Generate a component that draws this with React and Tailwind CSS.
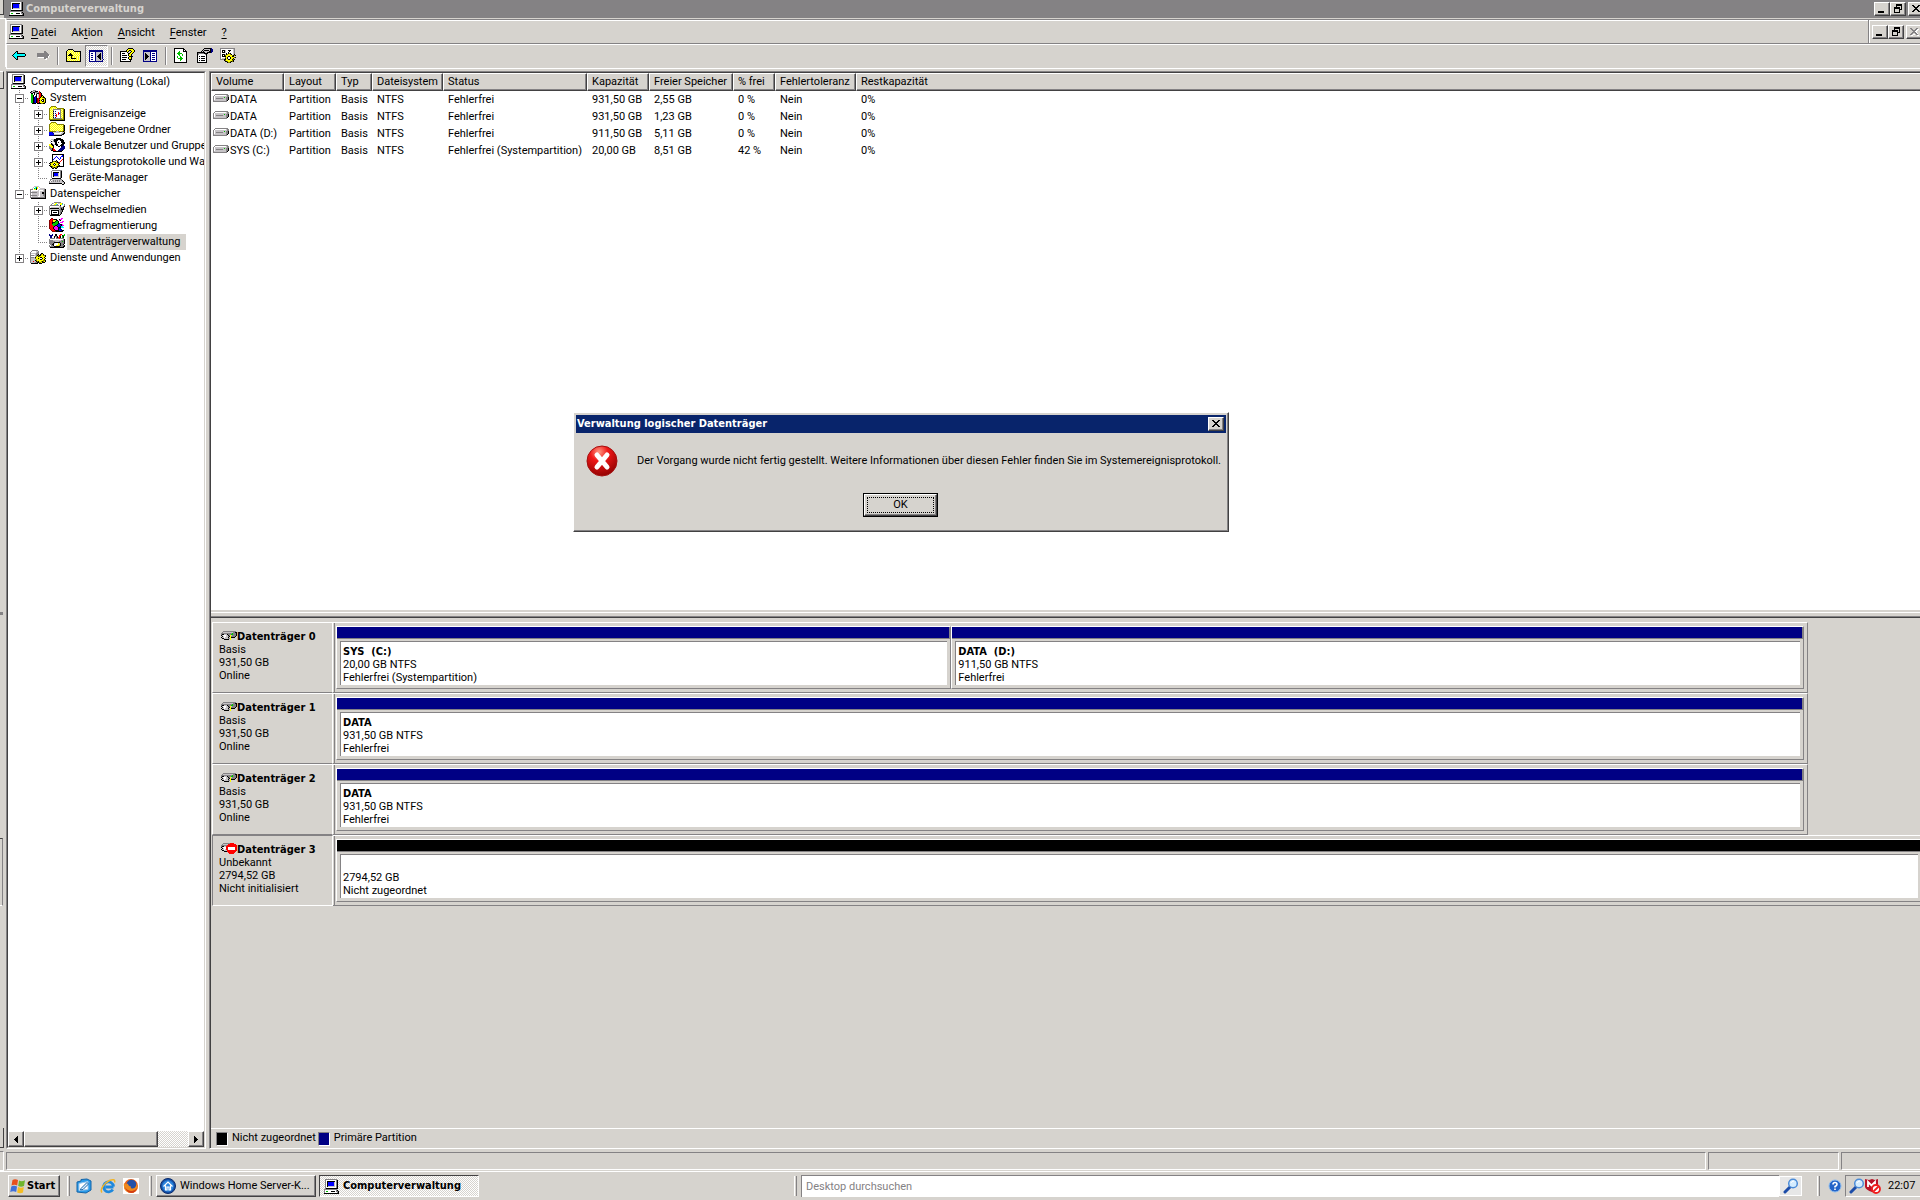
const palette = {
  k: '#000000',
  w: '#ffffff',
  g: '#848284',
  s: '#c6c3c6',
  b: '#0000ff',
  n: '#000084',
  y: '#ffff00',
  l: '#ffff9c',
  o: '#848200',
  r: '#ff0000',
  m: '#840000',
  e: '#00c300',
  c: '#00ffff',
  p: '#ff00ff',
}

const art = {
  computer: [
    '.gggggggggggg...',
    '.gwwwwwwwwwwgk..',
    '.gwkkkkkkkkwgk..',
    '.gwkbbbbbbswgk..',
    '.gwkbbbbbbswgk..',
    '.gwkbbbbbbswgk..',
    '.gwkbbbbbbswgk..',
    '.gwkssssssswgk..',
    '.gwwwwwwwwwwgk..',
    '.gkkkkkkkkkkkk..',
    'ggggggggggggg...',
    'gwwwwwwwwwwwgk..',
    'gweewwwkkkkwggk.',
    'gwwwwwwwwwwwwgk.',
    'kkkkkkkkkkkkkkk.',
  ],
  back: [
    '................',
    '................',
    '................',
    '....kk..........',
    '...kck..........',
    '..kcckkkkkkkk...',
    '.kccccccccccck..',
    'kcccccccccccck..',
    '.kccckkkkkkkk...',
    '..kcck..........',
    '...kck..........',
    '....kk..........',
  ],
  forward: [
    '................',
    '................',
    '................',
    '.........gg.....',
    '.........ggg....',
    '..ggggggggggg...',
    '..gggggggggggg..',
    '..ggggggggggggw.',
    '..gggggggggggw..',
    '...wwwwwwggggw..',
    '.........ggw....',
    '..........ww....',
  ],
  folderUp: [
    '................',
    '..kkkkk.........',
    '.klylylk........',
    'klylylylkkkkkkk.',
    'kylylylylylylyk.',
    'klylkylylylylyk.',
    'kylkkkylylylylk.',
    'klkkkkkylylylyk.',
    'kylylkylylylylk.',
    'klylykylylylylk.',
    'kylylkkkkkylylk.',
    'klylylylylylylk.',
    'kylylylylylylyk.',
    'kkkkkkkkkkkkkkk.',
  ],
  treePane: [
    '................',
    '................',
    'nnnnnnnnnnnnnn..',
    'nnnnnnnnnnnnnn..',
    'nwwwwwnssssssn..',
    'nwnnwwnssssksn..',
    'nwwwwwnssskksn..',
    'nwnnwwnsskkksn..',
    'nwwwwwnskkkksn..',
    'nwnnwwnsskkksn..',
    'nwwwwwnssskksn..',
    'nwnnwwnsssskssn.'.slice(0, 16),
    'nwwwwwnssssssn..',
    'nnnnnnnnnnnnnn..',
  ],
  actionPane: [
    '................',
    '................',
    'nnnnnnnnnnnnnn..',
    'nnnnnnnnnnnnnn..',
    'nssssssnwwwwwn..',
    'nskssssnwnnnwn..',
    'nskksssnwwwwwn..',
    'nskkkssnwnnnwn..',
    'nskkkksnwwwwwn..',
    'nskkkssnwnnnwn..',
    'nskksssnwwwwwn..',
    'nskssssnwnnnwn..',
    'nssssssnwwwwwn..',
    'nnnnnnnnnnnnnn..',
  ],
  help: [
    '........kkkkk...',
    '.......kyyyyyk..',
    '......kyykkyyyk.',
    'kkkkkkkyk..kyyk.',
    'kwwwwwwk..kyyk..',
    'kwkkkwwwkkyyk...',
    'kwwwwwwwkyyk....',
    'kwkkkkkwkyyk....',
    'kwwwwwwwwkkkk...',
    'kwkkkkkwkyyk....',
    'kwwwwwwwkyyk....',
    'kwkkkkwwwkkk....',
    'kwwwwwwwwwk.....',
    'kkkkkkkkkkk.....',
  ],
  refresh: [
    'kkkkkkkkkk......',
    'kwwwwwwwwkk.....',
    'kwwwwwwwwkwk....',
    'kwwwwewwwkkkk...',
    'kwwweewwwwwwk...',
    'kwweeeeewwwwk...',
    'kwwweewwewwwk...',
    'kwwwwewwewwwk...',
    'kwwewwewwwwwk...',
    'kwwewweewwwwk...',
    'kwwweeeeewwwk...',
    'kwwwwweewwwwk...',
    'kwwwwwewwwwwk...',
    'kwwwwwwwwwwwk...',
    'kkkkkkkkkkkkk...',
  ],
  properties: [
    '.......kkkkkkkn.',
    '......kssssssknn',
    '.....kskkkkksknn',
    '....kskssssskknn',
    'kkkkkkkksskkkkn.',
    'kggggggkkkk.....',
    'kgwwwwwwgk......',
    'kwwwwwwwwk......',
    'kwkwkkkkwk......',
    'kwwwwwwwwk......',
    'kwkwkkkkwk......',
    'kwwwwwwwwk......',
    'kwkwkkkkwk......',
    'kwwwwwwwwk......',
    'kkkkkkkkkk......',
  ],
  settings: [
    'ggggggggggggggg.',
    'gwwwwwwwwwwwwsg.',
    'gwkkkswwkkkwwsg.',
    'gwkwkswwwkwwwsg.',
    'gwkkkswwkwwwwsg.',
    'gwwwwwkwkokwwsg.',
    'gwkkkskoyyokwsk.',
    'gwkwkoyyyyyyokok',
    'gwkkkkyykkyykk..',
    'gwwwwoykwwkyyyok',
    'gwssskykwwkyyk..',
    'ggggkkyykkyykok.',
    '....koyyyyyyok..',
    '.....kkoyyokok..',
    '.......kook.....',
  ],
  tools: [
    '...ggg..........',
    '.kgsskkk.r......',
    'kgskkggsgrk.....',
    '.kk.kwgkkrrk....',
    '.ee.kwk.srrk....',
    '.eek.wk.srrkk...',
    '.eek.nk.srrkyk..',
    '.eeknbk.srkyokk.',
    '.eeknbkmrkyyyyok',
    '.eeknbkmroyykkyk',
    '.eeknbkmrkykwkyk',
    '.eeknbkmroyykkyk',
    '.eeknbkmrkyyyyok',
    '..kkkk.kkkkookk.',
  ],
  events: [
    '..ooooo.........',
    '.oyylyyo........',
    'oyylylylooooooo.',
    'olylgggggggglyok',
    'oylygwwwwwwgylok',
    'olylkwnwwwwglyok',
    'oylygwwwwrwgylok',
    'olylkwnwwrbglyok',
    'oylygwwrwrwgylok',
    'olylkwnrwwwglyok',
    'oylygwwrwwwgylok',
    'olylkwnwwwwglyok',
    'oylygggggggggyok',
    'oooooooooooooook',
    '.kkkkkkkkkkkkkkk',
  ],
  shared: [
    '..ooooo.........',
    '.oylylyo........',
    'oylylylyooooooo.',
    'olylylylylylylok',
    'oylylylylylylyok',
    'olylylylylylylok',
    'oylylylylylylyok',
    'olylylylylylylok',
    'oylylylylylylyok',
    'ooooooosssooooko',
    'bbbnssssssswwssk',
    'bbbbnwwwwwwwsskk',
    'bbbbbsssssssgkk.',
    'nnnnnkkkkkkkk...',
  ],
  users: [
    '.......kkkkk....',
    '..ssskkkkkkkkk..',
    '.swwgkkkkwwkkkk.',
    '.wksskkkwwwwkkk.',
    '.swwwskkwkwwkkkk',
    '..kswwkkwwwwwkkk',
    'yykksskkkwwwkkk.',
    'yyykkwwkkwwkkkn.',
    'gyyykwwwwkkwknnn',
    'ggyykwwwwwwwnnnn',
    'gggkrwwwwwwnnnnn',
    '.ggkrrwwwwnnnnn.',
    '..kkrrrwwnnnnk..',
    '....kkkkkkkkk...',
  ],
  perf: [
    '...kkkkkkkkkkkk.',
    '...kwwwwwwwwwbk.',
    '...kwwwbwwwwbbk.',
    '...kwwbwbwwbwwk.',
    '...kwbwwwbwbwwk.',
    '...kbwwwwwbwwrk.',
    '...kwwwkwwwwrwk.',
    '...kookokwwrwwk.',
    '.kkoyyyokkrwwwk.',
    'koyyykyyyokwwwk.',
    '.kyykwkyykwwwwk.',
    'koyyykyyyokwwwk.',
    '.kkoyyyokkkkkkk.',
    '..kookook.......',
    '...kk.kk........',
  ],
  device: [
    '...gggggggggg...',
    '..gwwwwwwwwgk...',
    '..gwkkkkkkwgk...',
    '..gwkbbbbswgk...',
    '..gwkbbbbswgk...',
    '..gwkbbbbswgk...',
    '..gwkssssswgk...',
    '..gwwwwwwwwgk...',
    '...kkkkkkkkk....',
    '.ggssssssssgg...',
    '.gwsgsgsgsgssk..',
    'gwgsgsgsgsgssgk.',
    'gssssssssssssssk',
    'kkkkkkkkkkkkkwsk',
    '.............kk.',
  ],
  storage: [
    '....sssss.......',
    '...swceyws......',
    '..sweckywwsssss.',
    'gggwyykwwsssssgk',
    'gwwwwwwwswwwwsgk',
    'gwssssssswssssgk',
    'gggggggsswsskkgk',
    'gwssssssswsskkgk',
    'gwssssssswsssggk',
    'gggggggsswsssggk',
    'gwsssssswwssssgk',
    'gggggggggggggggk',
    '.kkkkkkkkkkkkkkk',
  ],
  removable: [
    '.....ggggggg....',
    '...gswyywssyyg..',
    '..gwwyycgwwyycwg',
    '.gggggggggwkwwwg',
    'gwwwwwwwwwsgwwgk',
    'gwsssssssssgggk.',
    'gkkkkkkkkksgkgk.',
    'gsssssssssggkkk.',
    'gwkkkkkkkksggk..',
    'gwkwwwwwwksggk..',
    'gwkwkkkkwksgk...',
    'gwkwwwwwwksgk...',
    'gskkkkkkkksk....',
    '.kkkkkkkkkk.....',
  ],
  defrag: [
    '..mm........pp..',
    '.mrrmkkk..kpp...',
    'mrrmyyykk.pk....',
    'mrrmyykeek...pp.',
    'mrrkkkeeek.ppp..',
    'mrrkeeeeekb.....',
    'mrreeeeekbbkkp..',
    'mrrreekkbbbbkpp.',
    'mrrrrkppkbbkcc..',
    'mrrrkppppkkkccc.',
    'mrrrkppppknn....',
    '.mrrrkpppkbnn...',
    '..mrrrkkkkbbnkk.',
    '...mmmmkkkkkkk..',
  ],
  diskMgmt: [
    'n..n..kk...rr..e',
    'nnnn..kk..rr.kee',
    '.nn..kggk.rk.ek.',
    '.nn..kwgkrrk.ek.',
    '.gggggwgggrgggg.',
    'gwwwwwwwwwwwwwgk',
    'ggggssssssssgggk',
    'ggggggssssgggegk',
    'gggggkkkkkkggggk',
    'ggggkswwwyskgggk',
    '.ggkkwwwwyykggk.',
    'gwggkwwyyygkgggk',
    'gggggkkkkkkgggkk',
    '.kkkkkkkkkkkkkk.',
  ],
  services: [
    '..gggggg........',
    '.gwwwwssg.......',
    'gwwwwwsgg.......',
    'gsssssggg..kk...',
    'gwwwwsggk.koyk..',
    'ggggssgkokkyyook',
    'gwwwwsoykoyyyyyk',
    'ggggskyyyykkyyk.',
    'gssssoyykywwkyyk',
    'gsssssoyyykkyyk.',
    'gsssskoyyyyyyook',
    'gssrsskokyyokoyk',
    'gssssggkkooykkk.',
    '.kkkkkkk.kkk....',
  ],
  volume: [
    '..ggggggggggggg.',
    '.gwwwwwwwwwwwsgg',
    'gwssssssssssssgg',
    'gwsssssssssesggk',
    'gwsgggggggsssggk',
    'gwsssssssssssggk',
    'gssssssssssssgk.',
    'gggggggggggggg..',
    '................',
  ],
  disk: [
    '..ggggggggggggg.',
    '.gssssssssssggkk',
    'gggggggggggegggk',
    'gkkssskgggeegggk',
    'kswwwsskgysggggk',
    '.kswwssgkyggggk.',
    'ksswsssk.ykkkk..',
    '.kkssssggy......',
    '...kkkkk.y......',
  ],
  diskError: [
    '..gggggggrrrr...',
    '.gsssssrrrrrrrr.',
    'ggggggrrrrrrrrrr',
    'gkkssrrrrrrrrrrr',
    'kswwwrrwwwwwwwrr',
    '.kswwrrwwwwwwwrr',
    'ksswsrrwwwwwwwrr',
    '.kksssrrrrrrrrrr',
    '...kkkrrrrrrrrr.',
    '.......rrrrrrr..',
    '........rrrrr...',
  ],
  minimize: [
    '............',
    '............',
    '............',
    '............',
    '............',
    '............',
    '............',
    '............',
    '..kkkkkk....',
    '..kkkkkk....',
  ],
  restore: [
    '............',
    '....kkkkkk..',
    '....kkkkkk..',
    '....k....k..',
    '..kkkkkk.k..',
    '..kkkkkk.k..',
    '..k....kkk..',
    '..k....k....',
    '..k....k....',
    '..kkkkkk....',
  ],
  close: [
    '............',
    '............',
    '..kk....kk..',
    '...kk..kk...',
    '....kkkk....',
    '.....kk.....',
    '....kkkk....',
    '...kk..kk...',
    '..kk....kk..',
  ],
  closeOff: [
    '............',
    '............',
    '..gg....gg..',
    '...gg..ggww.',
    '....ggggww..',
    '.....ggww...',
    '....ggggw...',
    '...gg..ggw..',
    '..gg.ww.gg..',
    '...ww....ww.',
  ],
  left: ['...k', '..kk', '.kkk', 'kkkk', '.kkk', '..kk', '...k'],
  right: ['k...', 'kk..', 'kkk.', 'kkkk', 'kkk.', 'kk..', 'k...'],
}

function PixelIcon({ name, className = '' }) {
  const rows = art[name]
  const width = rows[0].length
  let height = rows.length
  if (width === 12) height = 12
  if (width === 16 && rows.length > 11) height = 16
  const cells = []
  rows.forEach((row, y) => {
    let x = 0
    while (x < row.length) {
      let end = x + 1
      while (row[end] === row[x]) end++
      if (palette[row[x]]) {
        cells.push(<rect key={`${x}-${y}`} x={x} y={y} width={end - x} height={1} fill={palette[row[x]]} />)
      }
      x = end
    }
  })
  return (
    <svg
      width={width}
      height={height}
      viewBox={`0 0 ${width} ${height}`}
      shapeRendering="crispEdges"
      className={`shrink-0 ${className}`}
      aria-hidden="true"
    >
      {cells}
    </svg>
  )
}

const raised = 'border border-t-white border-l-white border-b-[#424142] border-r-[#424142] shadow-[inset_-1px_-1px_#848284] bg-[#d6d3ce]'
const sunken = 'border border-t-[#848284] border-l-[#848284] border-b-white border-r-white'
const dither = 'bg-[repeating-conic-gradient(#ffffff_0_25%,#d6d3ce_0_50%)] bg-[length:2px_2px]'
const bold = "font-['DejaVu_Sans_Condensed',sans-serif] font-bold"

function CaptionButton({ icon, label, className = '' }) {
  return (
    <button type="button" aria-label={label} className={`flex h-[14px] w-4 items-center justify-center ${raised} ${className}`}>
      <PixelIcon name={icon} />
    </button>
  )
}

function TitleBar() {
  return (
    <div className="flex h-[18px] items-center bg-[#848284] pl-[3px]">
      <PixelIcon name="computer" />
      <h1 className={`ml-px flex-1 text-[11px] text-[#d6d3ce] ${bold}`}>Computerverwaltung</h1>
      <CaptionButton icon="minimize" label="Minimieren" />
      <CaptionButton icon="restore" label="Verkleinern" />
      <CaptionButton icon="close" label="Schließen" className="ml-[2px] -mr-1" />
    </div>
  )
}

const menus = [
  ['', 'D', 'atei'],
  ['Ak', 't', 'ion'],
  ['', 'A', 'nsicht'],
  ['', 'F', 'enster'],
  ['', '?', ''],
]

function MenuBar() {
  return (
    <div className="mt-px flex h-[25px] border-t border-b border-l border-t-[#848284] border-b-[#848284] border-l-white">
      <nav className="flex flex-1 items-center border-t border-white pl-[2px]">
        <PixelIcon name="computer" />
        {menus.map(([pre, key, post]) => (
          <button type="button" key={key} className="pt-px pr-[7px] pl-2 leading-4 first-of-type:pl-[6px]">
            {pre}
            <span className="underline underline-offset-2">{key}</span>
            {post}
          </button>
        ))}
      </nav>
      <div className="flex items-center border-l border-[#848284] pl-[3px] shadow-[inset_1px_1px_#ffffff]">
        <CaptionButton icon="minimize" label="Fenster minimieren" />
        <CaptionButton icon="restore" label="Fenster verkleinern" />
        <CaptionButton icon="closeOff" label="Fenster schließen" className="ml-[2px] -mr-[2px]" />
      </div>
    </div>
  )
}

function Divider() {
  return <span className="mx-[3px] mt-[2px] h-[18px] w-[2px] border-l border-r border-l-[#848284] border-r-white" />
}

function ToolButton({ icon, label, pressed }) {
  return (
    <button
      type="button"
      aria-label={label}
      aria-pressed={pressed}
      className={`flex h-[22px] w-[23px] items-center justify-center ${pressed ? `${sunken} ${dither}` : ''}`}
    >
      <PixelIcon name={icon} />
    </button>
  )
}

function ToolBar() {
  return (
    <div className="flex h-[25px] items-start border-t border-b border-l border-white pl-px">
      <ToolButton icon="back" label="Zurück" />
      <ToolButton icon="forward" label="Vorwärts" />
      <Divider />
      <ToolButton icon="folderUp" label="Aufwärts" />
      <ToolButton icon="treePane" label="Konsolenstruktur" pressed />
      <Divider />
      <ToolButton icon="help" label="Hilfe" />
      <ToolButton icon="actionPane" label="Aktionsbereich" />
      <Divider />
      <ToolButton icon="refresh" label="Aktualisieren" />
      <ToolButton icon="properties" label="Eigenschaften" />
      <ToolButton icon="settings" label="Einstellungen" />
    </div>
  )
}

// guide letters: v = line through, m = minus box, p = plus box, b = branch, e = last branch, x = last plus box
const tree = [
  { guides: '', icon: 'computer', label: 'Computerverwaltung (Lokal)' },
  { guides: 'm', icon: 'tools', label: 'System' },
  { guides: 'vp', icon: 'events', label: 'Ereignisanzeige' },
  { guides: 'vp', icon: 'shared', label: 'Freigegebene Ordner' },
  { guides: 'vp', icon: 'users', label: 'Lokale Benutzer und Gruppen' },
  { guides: 'vp', icon: 'perf', label: 'Leistungsprotokolle und Warnungen' },
  { guides: 've', icon: 'device', label: 'Geräte-Manager' },
  { guides: 'm', icon: 'storage', label: 'Datenspeicher' },
  { guides: 'vp', icon: 'removable', label: 'Wechselmedien' },
  { guides: 'vb', icon: 'defrag', label: 'Defragmentierung' },
  { guides: 've', icon: 'diskMgmt', label: 'Datenträgerverwaltung', selected: true },
  { guides: 'x', icon: 'services', label: 'Dienste und Anwendungen' },
]

function Guide({ type }) {
  const box = 'mpx'.includes(type)
  const last = 'ex'.includes(type)
  return (
    <svg width="19" height="16" viewBox="0 0 19 16" shapeRendering="crispEdges" className="shrink-0" aria-hidden="true">
      <path d={last ? 'M9.5 0V8' : 'M9.5 0V16'} stroke="#848284" strokeDasharray="1 1" />
      {type !== 'v' && <path d="M9 8.5H19" stroke="#848284" strokeDasharray="1 1" />}
      {box && <rect x="5.5" y="4.5" width="8" height="8" fill="#fff" stroke="#848284" />}
      {box && <path d={type === 'm' ? 'M7 8.5H12' : 'M7 8.5H12M9.5 6V11'} stroke="#000" />}
    </svg>
  )
}

function ScrollBar() {
  return (
    <div className={`flex h-4 ${dither}`}>
      <button type="button" aria-label="Nach links" className={`flex w-4 items-center justify-center ${raised}`}>
        <PixelIcon name="left" />
      </button>
      <div className={`w-[134px] ${raised}`} />
      <div className="flex-1" />
      <button type="button" aria-label="Nach rechts" className={`flex w-4 items-center justify-center ${raised}`}>
        <PixelIcon name="right" />
      </button>
    </div>
  )
}

function TreePane() {
  return (
    <aside className={`flex w-[200px] shrink-0 ${sunken}`}>
      <div className="flex min-w-0 flex-1 flex-col border border-t-[#424142] border-l-[#424142] border-b-[#d6d3ce] border-r-[#d6d3ce] bg-white">
        <ul className="flex-1 overflow-hidden pt-px">
          {tree.map((node) => (
            <li key={node.label} className="flex h-4 pl-[2px]">
              {node.guides.split('').map((g, i) => <Guide key={i} type={g} />)}
              <PixelIcon name={node.icon} className="ml-px" />
              <button
                type="button"
                className={`ml-[2px] pl-[2px] leading-4 whitespace-nowrap ${node.selected ? 'bg-[#d6d3ce] pr-[6px]' : ''}`}
              >
                {node.label}
              </button>
            </li>
          ))}
        </ul>
        <ScrollBar />
      </div>
    </aside>
  )
}

const columns = [
  { label: 'Volume', width: 'w-[73px]' },
  { label: 'Layout', width: 'w-[52px]' },
  { label: 'Typ', width: 'w-[36px]' },
  { label: 'Dateisystem', width: 'w-[71px]' },
  { label: 'Status', width: 'w-[144px]' },
  { label: 'Kapazität', width: 'w-[62px]' },
  { label: 'Freier Speicher', width: 'w-[84px]' },
  { label: '% frei', width: 'w-[42px]' },
  { label: 'Fehlertoleranz', width: 'w-[81px]' },
  { label: 'Restkapazität', width: '' },
]

const volumes = [
  ['DATA', 'Partition', 'Basis', 'NTFS', 'Fehlerfrei', '931,50 GB', '2,55 GB', '0 %', 'Nein', '0%'],
  ['DATA', 'Partition', 'Basis', 'NTFS', 'Fehlerfrei', '931,50 GB', '1,23 GB', '0 %', 'Nein', '0%'],
  ['DATA (D:)', 'Partition', 'Basis', 'NTFS', 'Fehlerfrei', '911,50 GB', '5,11 GB', '0 %', 'Nein', '0%'],
  ['SYS (C:)', 'Partition', 'Basis', 'NTFS', 'Fehlerfrei (Systempartition)', '20,00 GB', '8,51 GB', '42 %', 'Nein', '0%'],
]

function VolumeTable() {
  return (
    <div className="overflow-hidden bg-white">
      <table className="w-full table-fixed border-separate border-spacing-0 text-left whitespace-nowrap">
        <thead>
          <tr>
            {columns.map((col) => (
              <th
                key={col.label}
                className={`h-[18px] pl-1 leading-4 font-normal ${raised} last:border-r-0 last:shadow-[inset_0_-1px_#848284] ${col.width}`}
              >
                {col.label}
              </th>
            ))}
          </tr>
        </thead>
        <tbody>
          {volumes.map((row, i) => (
            <tr key={i}>
              {row.map((cell, j) => (
                <td key={j} className={`h-[17px] leading-4 ${j ? 'pl-[5px]' : 'pl-[2px]'}`}>
                  {j ? cell : (
                    <span className="flex items-center gap-px">
                      <PixelIcon name="volume" className="mb-[2px]" />
                      {cell}
                    </span>
                  )}
                </td>
              ))}
            </tr>
          ))}
        </tbody>
      </table>
    </div>
  )
}

const disks = [
  {
    name: 'Datenträger 0',
    info: ['Basis', '931,50 GB', 'Online'],
    parts: [
      { title: 'SYS  (C:)', lines: ['20,00 GB NTFS', 'Fehlerfrei (Systempartition)'], grow: 615 },
      { title: 'DATA  (D:)', lines: ['911,50 GB NTFS', 'Fehlerfrei'], grow: 853 },
    ],
  },
  {
    name: 'Datenträger 1',
    info: ['Basis', '931,50 GB', 'Online'],
    parts: [{ title: 'DATA', lines: ['931,50 GB NTFS', 'Fehlerfrei'], grow: 1 }],
  },
  {
    name: 'Datenträger 2',
    info: ['Basis', '931,50 GB', 'Online'],
    parts: [{ title: 'DATA', lines: ['931,50 GB NTFS', 'Fehlerfrei'], grow: 1 }],
  },
  {
    name: 'Datenträger 3',
    info: ['Unbekannt', '2794,52 GB', 'Nicht initialisiert'],
    parts: [{ title: '', lines: ['2794,52 GB', 'Nicht zugeordnet'], grow: 1 }],
    unknown: true,
  },
]

function Partition({ part, unknown }) {
  return (
    <div
      className={`flex basis-0 flex-col border-t border-l border-b border-t-white border-l-white border-b-[#848284] ${
        unknown ? '' : 'border-r border-r-[#848284]'
      }`}
      style={{ flexGrow: part.grow }}
    >
      <div className={`h-3 border-b border-[#848284] ${unknown ? 'bg-black' : 'border-r bg-[#000084]'}`} />
      <div
        className={`mt-[2px] mb-[3px] ml-[3px] flex-1 border-t border-l border-[#848284] bg-white pt-[3px] pl-[2px] leading-[13px] ${
          unknown ? 'mr-[2px]' : 'mr-[3px]'
        }`}
      >
        <p className={`h-[13px] whitespace-pre ${bold}`}>{part.title}</p>
        {part.lines.map((line) => <p key={line}>{line}</p>)}
      </div>
    </div>
  )
}

function DiskRow({ disk }) {
  return (
    <li
      className={`flex h-[71px] border-t border-b border-t-white border-b-[#848284] ${
        disk.unknown ? '' : 'mr-[112px] border-r border-r-[#848284]'
      }`}
    >
      <div
        className={`-my-px w-[121px] shrink-0 border pt-[7px] pl-[6px] leading-[13px] ${
          disk.unknown
            ? 'border-t-[#848284] border-l-[#848284] border-b-white border-r-white'
            : 'border-t-white border-l-white border-b-[#848284] border-r-white'
        }`}
      >
        <p className={`flex items-center pl-[2px] ${bold}`}>
          <PixelIcon name={disk.unknown ? 'diskError' : 'disk'} className="mb-[2px]" />
          {disk.name}
        </p>
        {disk.info.map((line) => <p key={line}>{line}</p>)}
      </div>
      <div className="mr-px w-[2px] shrink-0 border-r border-[#848284]" />
      <div className={`flex flex-1 pt-[3px] pb-[3px] ${disk.unknown ? '' : 'pr-[3px]'}`}>
        {disk.parts.map((part) => <Partition key={part.title} part={part} unknown={disk.unknown} />)}
      </div>
    </li>
  )
}

function DiskPane() {
  return (
    <div className="flex flex-col overflow-hidden">
      <ul className="flex-1 pt-1 pl-px">
        {disks.map((disk) => <DiskRow key={disk.name} disk={disk} />)}
      </ul>
      <div className="flex h-5 items-center border-t border-white pl-[5px]">
        <span className={`mr-1 h-[14px] w-3 bg-black ${sunken}`} />
        Nicht zugeordnet
        <span className={`mr-1 ml-[2px] h-[14px] w-3 bg-[#000084] ${sunken}`} />
        Primäre Partition
      </div>
    </div>
  )
}

function ErrorDialog() {
  return (
    <div
      role="alertdialog"
      aria-labelledby="dialog-title"
      aria-describedby="dialog-text"
      className={`absolute top-[412px] left-[573px] w-[656px] p-[2px] ${raised}`}
    >
      <div className="flex h-[18px] items-center bg-[#08246b] pr-[2px] pl-px text-white">
        <h2 id="dialog-title" className={`flex-1 ${bold}`}>Verwaltung logischer Datenträger</h2>
        <CaptionButton icon="close" label="Dialog schließen" />
      </div>
      <div className="flex items-center pt-3 pl-[10px]">
        <svg width="32" height="32" viewBox="0 0 32 32" aria-hidden="true">
          <defs>
            <radialGradient id="ball" cx="40%" cy="20%" r="85%">
              <stop offset="0" stopColor="#ff9a84" />
              <stop offset="0.35" stopColor="#ef1818" />
              <stop offset="1" stopColor="#8c0000" />
            </radialGradient>
          </defs>
          <circle cx="16" cy="16" r="15" fill="url(#ball)" stroke="#a51010" />
          <path d="M11 10L21 22M21 10L11 22" stroke="#fff" strokeWidth="5" strokeLinecap="round" />
        </svg>
        <p id="dialog-text" className="ml-[19px] pt-px whitespace-nowrap">
          Der Vorgang wurde nicht fertig gestellt. Weitere Informationen über diesen Fehler finden Sie im Systemereignisprotokoll.
        </p>
      </div>
      <div className="flex justify-center pt-4 pr-px pb-3">
        <button type="button" className="h-6 w-[75px] border border-black">
          <span className={`flex h-[22px] items-center justify-center p-[2px] ${raised}`}>
            <span className="flex h-4 flex-1 items-center justify-center border border-dotted border-black">OK</span>
          </span>
        </button>
      </div>
    </div>
  )
}

function StatusBar() {
  return (
    <div className="flex h-[22px] gap-[2px] pt-[3px] pb-px">
      <div className={`flex-1 ${sunken}`} />
      <div className={`w-[131px] ${sunken}`} />
      <div className={`w-[79px] ${sunken} border-r-0`} />
    </div>
  )
}

function Grip() {
  return <span className="h-5 w-[3px] border-l border-r border-l-white border-r-[#848284]" />
}

function WindowsFlag() {
  return (
    <svg width="16" height="16" viewBox="0 0 16 16" aria-hidden="true">
      <path d="M2.5 2Q5 0.5 8 2L7.2 7.5Q4.5 6.2 1.5 7.5Z" fill="#e8501c" />
      <path d="M9 2.5Q11.5 4 15 2.2L14 8Q11 9.4 8.2 8Z" fill="#6fb52c" />
      <path d="M1.3 8.5Q4 7.2 7 8.6L6.2 14Q3.2 12.6 0.2 14Z" fill="#3f6fd8" />
      <path d="M8 9Q10.8 10.4 13.8 9L13 14.5Q10 15.9 7.2 14.5Z" fill="#f5bd22" />
    </svg>
  )
}

function DesktopIcon() {
  return (
    <svg width="16" height="16" viewBox="0 0 16 16" aria-hidden="true">
      <path d="M1 4L5 3L5 1.5L11 1L15 3V12L10 15L1 14Z" fill="#2a9ae8" stroke="#1464a8" />
      <path d="M3 5.5L12 3.5V11.5L3 12.5Z" fill="#fff" stroke="#9cc8ee" />
      <path d="M5 10.5L11 4.5L12.5 6L7 11.5L4.5 12Z" fill="#ddeeff" stroke="#1464a8" />
    </svg>
  )
}

function ExplorerIcon() {
  return (
    <svg width="16" height="16" viewBox="0 0 16 16" aria-hidden="true">
      <path d="M13.5 9H5.2M12.8 11.5A5 5 0 1 1 13.5 8.5" fill="none" stroke="#1e88dc" strokeWidth="2.8" />
      <path d="M2 14.5C-0.5 12 4 5 9.5 2.5C13 1 15.5 1.5 14.5 4.5" fill="none" stroke="#f0b428" strokeWidth="1.5" />
    </svg>
  )
}

function FirefoxIcon() {
  return (
    <svg width="16" height="16" viewBox="0 0 16 16" aria-hidden="true" className="bg-white">
      <circle cx="8" cy="8" r="7" fill="#e8641c" />
      <circle cx="8.5" cy="6.5" r="4.8" fill="#2452a8" />
      <path d="M1 5Q3 7 5 5.5Q5 8 8 8.5Q7 11 10 10.5Q13 10 13.5 6Q16 9 13 13Q8 17 3 13Q0 10 1 5Z" fill="#f08a1c" />
      <path d="M2 9Q4 13 9 13Q12 13 14 10Q13 15 8 15Q3 14 2 9Z" fill="#d23c14" />
    </svg>
  )
}

function HomeServerIcon() {
  return (
    <svg width="16" height="16" viewBox="0 0 16 16" aria-hidden="true">
      <circle cx="8" cy="8" r="7.5" fill="#1450a8" stroke="#0c2c6c" />
      <circle cx="8" cy="8" r="5.8" fill="#2c84dc" />
      <path d="M3.5 8.5L8 4L12.5 8.5M5.5 7.5V12H7V9H9V12H10.5V7.5" fill="none" stroke="#fff" strokeWidth="1.2" />
    </svg>
  )
}

function Magnifier() {
  return (
    <svg width="16" height="16" viewBox="0 0 16 16" aria-hidden="true">
      <path d="M7 9L2 14" stroke="#1c4ca8" strokeWidth="3" strokeLinecap="round" />
      <circle cx="10" cy="5.5" r="4.3" fill="#d4ecff" stroke="#4c8cd8" strokeWidth="1.5" />
      <path d="M8 5Q8.5 3 11 3" stroke="#fff" fill="none" />
    </svg>
  )
}

function TrayHelp() {
  return (
    <svg width="14" height="14" viewBox="0 0 14 14" aria-hidden="true">
      <circle cx="7" cy="7" r="6" fill="#2464c8" stroke="#8cbcf0" />
      <path d="M5 5.5Q5 3.5 7 3.5Q9 3.5 9 5.2Q9 6.5 7 7.5V8.5M7 9.5V11" fill="none" stroke="#fff" strokeWidth="1.6" />
    </svg>
  )
}

function Shield() {
  return (
    <svg width="16" height="16" viewBox="0 0 16 16" aria-hidden="true">
      <path d="M0 1L4 2L7 1L10 2L13 1V9Q12 12 7 14Q1 12 0 9Z" fill="#b81428" />
      <path d="M3 9V4L6.5 7.5L10 4V8" fill="none" stroke="#fff" strokeWidth="1.8" />
      <circle cx="11" cy="11" r="4" fill="#fff" stroke="#f01c1c" strokeWidth="1.8" />
      <path d="M8.5 13.5L13.5 8.5" stroke="#f01c1c" strokeWidth="1.8" />
    </svg>
  )
}

function TaskBar() {
  return (
    <footer className="flex h-[29px] items-center border-t border-white">
      <button type="button" className={`ml-2 flex h-[22px] w-[52px] items-center gap-px pl-px ${raised} ${bold}`}>
        <WindowsFlag />
        Start
      </button>
      <div className="ml-[7px] flex items-center">
        <Grip />
        <div className="ml-[6px] flex gap-2">
          <button type="button" aria-label="Desktop anzeigen"><DesktopIcon /></button>
          <button type="button" aria-label="Internet Explorer"><ExplorerIcon /></button>
          <button type="button" aria-label="Firefox" className="-ml-px"><FirefoxIcon /></button>
        </div>
      </div>
      <div className="ml-[10px] flex flex-1 items-center">
        <Grip />
        <button type="button" className={`ml-1 flex h-[22px] w-[160px] items-center gap-1 pl-[3px] ${raised}`}>
          <HomeServerIcon />
          Windows Home Server-K...
        </button>
        <button
          type="button"
          aria-pressed="true"
          className={`ml-[3px] flex h-[22px] w-[160px] items-center gap-[3px] border border-t-[#424142] border-l-[#424142] border-b-white border-r-white pt-px pl-1 ${dither} ${bold}`}
        >
          <PixelIcon name="computer" />
          Computerverwaltung
        </button>
      </div>
      <Grip />
      <form className="ml-1 flex items-center">
        <input
          type="text"
          aria-label="Desktop durchsuchen"
          placeholder="Desktop durchsuchen"
          className="h-[22px] w-[978px] border-t border-l border-[#848284] bg-white pl-1 text-[11px] placeholder-[#848284]"
        />
        <button type="button" aria-label="Suchen" className="flex h-5 w-[23px] items-center justify-center border border-white bg-[#e7e7e7]">
          <Magnifier />
        </button>
      </form>
      <div className="ml-[15px] flex items-center">
        <Grip />
        <div className="mr-[3px] ml-2"><TrayHelp /></div>
        <div className="flex h-[22px] w-[75px] items-center border border-t-[#848284] border-l-[#848284] border-b-white border-r-0 pl-[3px]">
          <Magnifier />
          <Shield />
          <time className="ml-[7px]">22:07</time>
        </div>
      </div>
    </footer>
  )
}

// sliver of the window that lies behind
function BackWindow() {
  return (
    <div className="flex w-[6px] shrink-0 flex-col">
      <div className="h-[18px] border-r-2 border-[#848284]">
        <div className="h-[15px] border-r border-b border-[#424142]" />
      </div>
      <div className="h-[49px] border-t border-r border-t-white border-r-white" />
      <div className="mt-1 h-[18px] w-1 border border-l-0 border-t-white border-r-[#424142] border-b-[#424142]" />
      <div className="flex-[522]" />
      <div className="h-[3px] w-[3px] bg-[#848284]" />
      <div className="flex-[223]" />
      <div className="h-[68px] w-[3px] border border-l-0 border-t-[#424142] border-r-[#848284] border-b-white" />
      <div className="flex-[222]" />
      <div className="h-5 w-1 border-r border-b border-[#424142]" />
      <div className="mt-[3px] h-5 w-1 border border-l-0 border-t-[#848284] border-r-white border-b-white" />
    </div>
  )
}

export default function App() {
  return (
    <div className="relative flex h-screen flex-col overflow-hidden bg-[#d6d3ce] font-[Roboto,sans-serif] text-[11px] text-black">
      <div className="flex min-h-0 flex-1">
        <BackWindow />
        <div className="flex min-w-0 flex-1 flex-col">
          <TitleBar />
          <MenuBar />
          <ToolBar />
          <main className="mt-[2px] flex min-h-0 flex-1">
            <TreePane />
            <section className={`ml-[3px] flex min-w-0 flex-1 ${sunken} border-r-0`}>
              <div className="grid min-w-0 flex-1 grid-rows-[minmax(0,537fr)_8px_minmax(0,530fr)] border-t border-l border-[#424142]">
                <VolumeTable />
                <div className="border-b border-[#424142] pt-[2px]">
                  <div className="h-[5px] border-t border-b border-t-white border-b-[#848284]" />
                </div>
                <DiskPane />
              </div>
            </section>
          </main>
          <StatusBar />
        </div>
      </div>
      <TaskBar />
      <ErrorDialog />
    </div>
  )
}
